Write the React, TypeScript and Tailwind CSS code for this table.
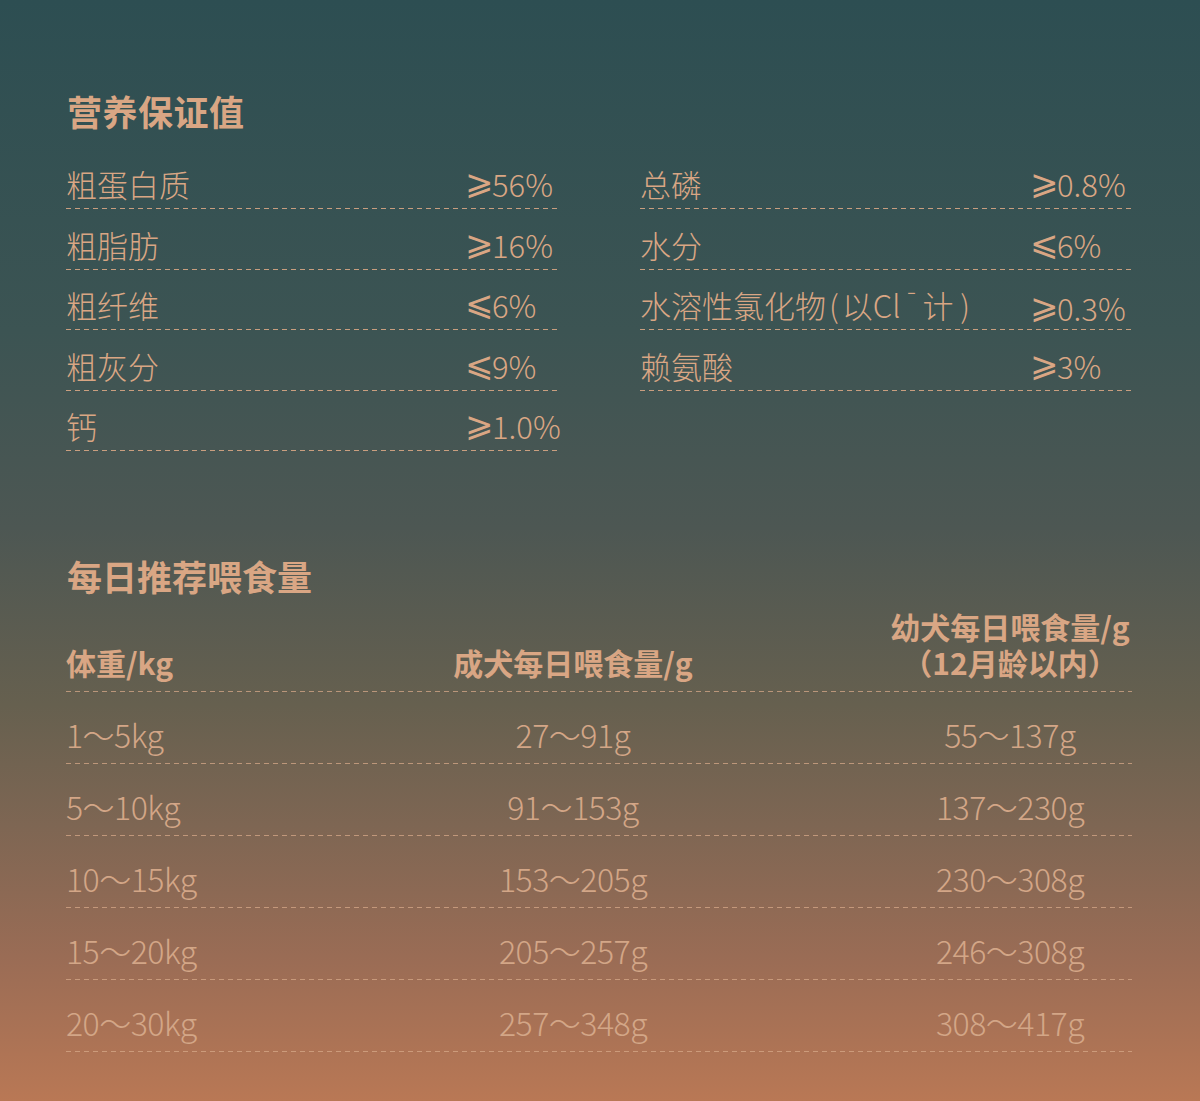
const nutrientsLeft = [
  { label: "粗蛋白质", sign: "⩾", value: "56%" },
  { label: "粗脂肪", sign: "⩾", value: "16%" },
  { label: "粗纤维", sign: "⩽", value: "6%" },
  { label: "粗灰分", sign: "⩽", value: "9%" },
  { label: "钙", sign: "⩾", value: "1.0%" },
];

const nutrientsRight = [
  { label: "总磷", sign: "⩾", value: "0.8%" },
  { label: "水分", sign: "⩽", value: "6%" },
  { label: "chloride", sign: "⩾", value: "0.3%" },
  { label: "赖氨酸", sign: "⩾", value: "3%" },
];

const feeding = [
  ["1～5kg", "27～91g", "55～137g"],
  ["5～10kg", "91～153g", "137～230g"],
  ["10～15kg", "153～205g", "230～308g"],
  ["15～20kg", "205～257g", "246～308g"],
  ["20～30kg", "257～348g", "308～417g"],
];

function Dashed({ fine }: { fine?: boolean }) {
  return fine ? (
    <div className="h-px w-full bg-[repeating-linear-gradient(90deg,rgba(214,168,136,0.75)_0px,rgba(214,168,136,0.75)_5px,transparent_5px,transparent_9px)]" />
  ) : (
    <div className="h-px w-full bg-[repeating-linear-gradient(90deg,rgba(216,166,132,0.9)_0px,rgba(216,166,132,0.9)_5px,transparent_5px,transparent_9px)]" />
  );
}

function NutrientRow({
  label,
  sign,
  value,
  valueCol,
}: {
  label: string;
  sign: string;
  value: string;
  valueCol: string;
}) {
  return (
    <div className="pt-[19.5px]">
      <div className={`grid ${valueCol} h-[32px] items-center text-[31px] leading-[32px] font-light`}>
        <span className="whitespace-nowrap">
          {label === "chloride" ? (
            <>
              水溶性氯化物<span className="mx-[3px]">(</span>以Cl
              <span className="relative -top-[12px] text-[18px] font-bold mx-[2px]">ˉ</span>计 )
            </>
          ) : (
            label
          )}
        </span>
        <span className="whitespace-nowrap flex items-center">
          <span className="inline-block w-[27px] h-[32px] leading-[32px] font-['DejaVu_Sans',sans-serif] font-extralight text-[34px] -translate-y-[2px]">
            {sign}
          </span>
          <span>{value}</span>
        </span>
      </div>
      <div className="mt-[8px]">
        <Dashed />
      </div>
    </div>
  );
}

export default function App() {
  return (
    <div className="w-[1200px] h-[1101px] overflow-hidden bg-[linear-gradient(180deg,#2d4e52_0%,#3c5453_30%,#4d5753_48%,#66604f_64%,#7e6653_75%,#9a6c55_87%,#b97855_100%)] text-[#d9a684] font-['Noto_Sans_CJK_SC','Noto_Sans',sans-serif]">
      <div className="pl-[66px] pr-[66px] pt-[93px]">
        <h2 className="text-[35px] leading-[36px] font-bold tracking-[0.5px] pl-px">营养保证值</h2>

        <div className="mt-[19.5px] grid grid-cols-[494px_494px] gap-x-[80px]">
          <div>
            {nutrientsLeft.map((n) => (
              <NutrientRow key={n.label} {...n} valueCol="grid-cols-[399px_1fr]" />
            ))}
          </div>
          <div>
            {nutrientsRight.map((n) => (
              <NutrientRow key={n.label} {...n} valueCol="grid-cols-[390px_1fr]" />
            ))}
          </div>
        </div>

        <h2 className="mt-[107px] text-[35px] leading-[36px] font-bold pl-px">每日推荐喂食量</h2>

        <div className="mt-[14px] w-[1066px]">
          <div className="grid grid-cols-[192px_630px_244px] items-end text-[30px] leading-[36px] font-bold">
            <div className="whitespace-nowrap">体重/kg</div>
            <div className="text-center whitespace-nowrap">成犬每日喂食量/g</div>
            <div className="text-center whitespace-nowrap">
              <div>幼犬每日喂食量/g</div>
              <div>（12月龄以内）</div>
            </div>
          </div>
          <div className="mt-[11px]">
            <Dashed fine />
          </div>

          {feeding.map((row) => (
            <div key={row[0]}>
              <div className="pt-[26px] pb-[13px] grid grid-cols-[192px_630px_244px] text-[32px] leading-[32px] font-light text-[#d3a687] tracking-[-0.5px]">
                <div className="whitespace-nowrap">{row[0]}</div>
                <div className="text-center whitespace-nowrap">{row[1]}</div>
                <div className="text-center whitespace-nowrap">{row[2]}</div>
              </div>
              <Dashed fine />
            </div>
          ))}
        </div>
      </div>
    </div>
  );
}
